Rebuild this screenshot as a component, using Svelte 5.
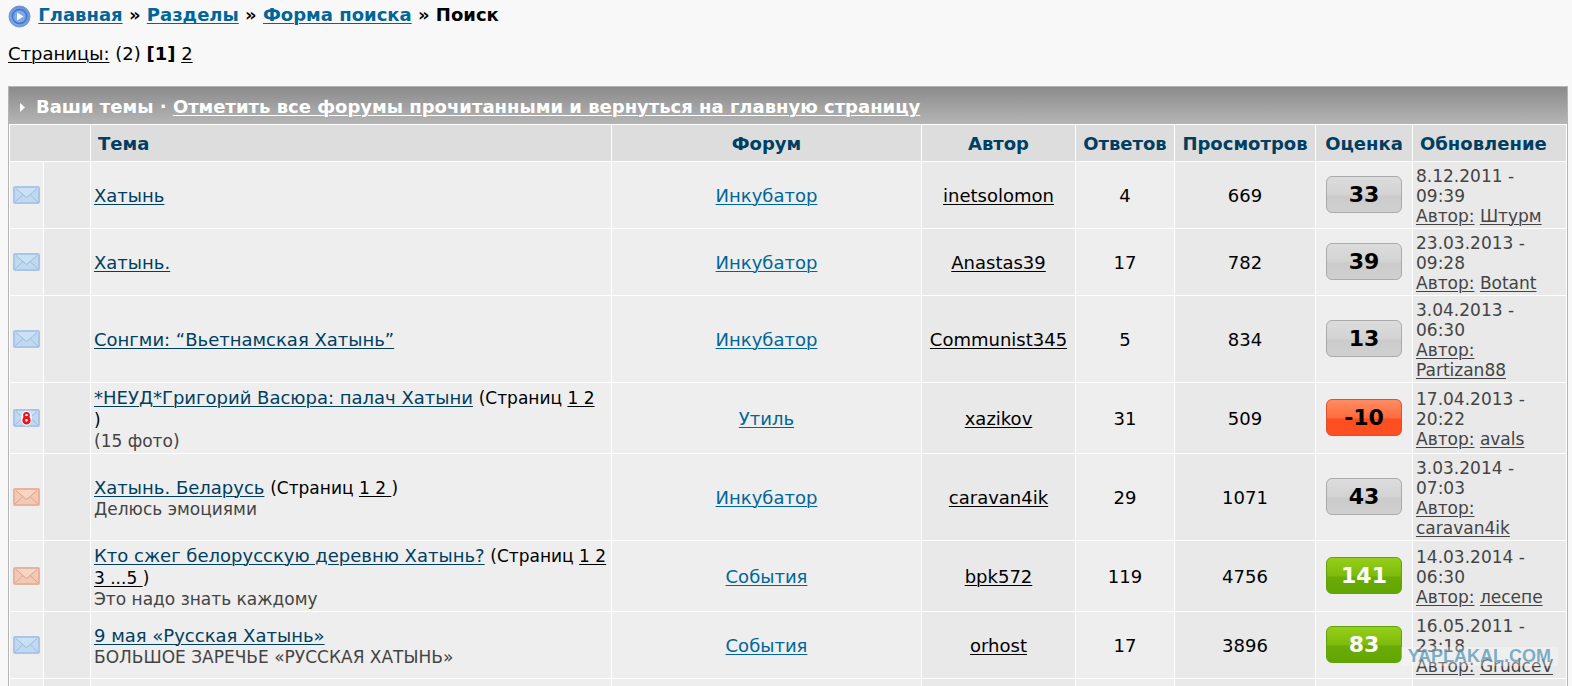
<script lang="ts">
	type Mail = 'read' | 'hot' | 'closed';

	interface Topic {
		mail: Mail;
		title: string;
		pages?: string[];
		desc?: string;
		forum: string;
		author: string;
		replies: number;
		views: number;
		rating: number;
		date: string;
		time: string;
		last: string;
	}

	// Each entry of pages is one line of page numbers
	const topics: Topic[] = [
		{ mail: 'read', title: 'Хатынь', forum: 'Инкубатор', author: 'inetsolomon', replies: 4, views: 669, rating: 33, date: '8.12.2011', time: '09:39', last: 'Штурм' },
		{ mail: 'read', title: 'Хатынь.', forum: 'Инкубатор', author: 'Anastas39', replies: 17, views: 782, rating: 39, date: '23.03.2013', time: '09:28', last: 'Botant' },
		{ mail: 'read', title: 'Сонгми: “Вьетнамская Хатынь”', forum: 'Инкубатор', author: 'Communist345', replies: 5, views: 834, rating: 13, date: '3.04.2013', time: '06:30', last: 'Partizan88' },
		{ mail: 'closed', title: '*НЕУД*Григорий Васюра: палач Хатыни', pages: ['1 2', ''], desc: '(15 фото)', forum: 'Утиль', author: 'xazikov', replies: 31, views: 509, rating: -10, date: '17.04.2013', time: '20:22', last: 'avals' },
		{ mail: 'hot', title: 'Хатынь. Беларусь', pages: ['1 2 '], desc: 'Делюсь эмоциями', forum: 'Инкубатор', author: 'caravan4ik', replies: 29, views: 1071, rating: 43, date: '3.03.2014', time: '07:03', last: 'caravan4ik' },
		{ mail: 'hot', title: 'Кто сжег белорусскую деревню Хатынь?', pages: ['1 2', '3 ...5 '], desc: 'Это надо знать каждому', forum: 'События', author: 'bpk572', replies: 119, views: 4756, rating: 141, date: '14.03.2014', time: '06:30', last: 'лесепе' },
		{ mail: 'read', title: '9 мая «Русская Хатынь»', desc: 'БОЛЬШОЕ ЗАРЕЧЬЕ «РУССКАЯ ХАТЫНЬ»', forum: 'События', author: 'orhost', replies: 17, views: 3896, rating: 83, date: '16.05.2011', time: '23:18', last: 'GrudceV' }
	];

	function getRatingClass(rating: number): string {
		if (rating < 0) return 'bad';
		return rating > 50 ? 'good' : 'neutral';
	}
</script>

<div class="page">
	<nav class="crumbs">
		<svg class="navIcon" width="23" height="23" viewBox="0 0 23 23" aria-hidden="true">
			<defs>
				<radialGradient id="ball" cx="0.4" cy="0.6" r="0.6">
					<stop offset="0" stop-color="#8db4f0" />
					<stop offset="1" stop-color="#6593dd" />
				</radialGradient>
			</defs>
			<circle cx="11.5" cy="11.5" r="10.5" fill="url(#ball)" stroke="#6a93d6" />
			<circle cx="11.5" cy="11.5" r="7" fill="#7fa8ea" stroke="#4573c2" stroke-width="1.5" />
			<path d="M9 7.5L15.5 11.5L9 15.5Z" fill="#fff" />
		</svg>
		<a href="#main">Главная</a> » <a href="#sections">Разделы</a> » <a href="#form">Форма поиска</a> » Поиск
	</nav>

	<div class="pager"><a href="#pages">Страницы:</a> (2) <b>[1]</b> <a href="#page2">2</a></div>

	<section class="board">
		<h1 class="boardTitle">
			<svg width="5" height="9" viewBox="0 0 5 9" aria-hidden="true"><path d="M0 0L5 4.5L0 9Z" fill="#fff" /></svg>
			<span>Ваши темы · <a href="#read">Отметить все форумы прочитанными и вернуться на главную страницу</a></span>
		</h1>
		<table>
			<colgroup>
				<col class="colIcon" />
				<col class="colGap" />
				<col class="colTopic" />
				<col />
				<col class="colAuthor" />
				<col class="colReplies" />
				<col class="colViews" />
				<col class="colRating" />
				<col class="colLast" />
			</colgroup>
			<thead>
				<tr>
					<th colspan="2"></th>
					<th class="left">Тема</th>
					<th>Форум</th>
					<th>Автор</th>
					<th>Ответов</th>
					<th>Просмотров</th>
					<th>Оценка</th>
					<th class="left">Обновление</th>
				</tr>
			</thead>
			<tbody>
				{#each topics as topic}
					<tr>
						<td class="icon">
							<svg class={topic.mail} width="27" height="18" viewBox="0 0 27 18" aria-hidden="true">
								<rect class="paper" x="1" y="1" width="25" height="16" rx="1" />
								<path class="flap" d="M3 2H24L13.5 11Z" />
								<path class="fold" d="M2 16L10 8.5M25 16L17 8.5M3 2.5L11 9.5L13.5 11.5L16 9.5L24 2.5" />
								{#if topic.mail === 'closed'}
									<ellipse cx="13.5" cy="9.3" rx="5.5" ry="7.5" fill="#fff" />
									<circle cx="13.5" cy="6.3" r="2.4" fill="none" stroke="#e8141c" stroke-width="2" />
									<circle cx="13.5" cy="11.3" r="2.8" fill="none" stroke="#e8141c" stroke-width="2.8" />
								{/if}
							</svg>
						</td>
						<td class="dark"></td>
						<td class="topic">
							<a href="#topic">{topic.title}</a>
							{#if topic.pages}
								<span class="pageList">(Страниц <a href="#pages">{topic.pages.join('\n')}</a>)</span>
							{/if}
							{#if topic.desc}
								<div class="desc">{topic.desc}</div>
							{/if}
						</td>
						<td class="forum"><a href="#forum">{topic.forum}</a></td>
						<td class="dark"><a href="#author">{topic.author}</a></td>
						<td>{topic.replies}</td>
						<td class="dark">{topic.views}</td>
						<td class="score"><div class="rating {getRatingClass(topic.rating)}">{topic.rating}</div></td>
						<td class="dark last">
							{topic.date} - {topic.time}<br />
							<a href="#last">Автор:</a> <a href="#user">{topic.last}</a>
						</td>
					</tr>
				{/each}
				<tr class="next">
					<td></td>
					<td class="dark"></td>
					<td></td>
					<td></td>
					<td class="dark"></td>
					<td></td>
					<td class="dark"></td>
					<td></td>
					<td class="dark"></td>
				</tr>
			</tbody>
		</table>
	</section>
	<div class="watermark">YAPLAKAL.COM</div>
</div>

<style>
	:global(body) {
		margin: 0;
		background: #f8f8f8;
	}
	.page {
		position: relative;
		height: 100vh;
		box-sizing: border-box;
		overflow: hidden;
		padding: 4px 4px 0 8px;
		font-family: 'DejaVu Sans', Verdana, sans-serif;
		font-size: 18px;
		line-height: 22px;
		color: #000;
	}
	a {
		color: inherit;
		text-underline-offset: 2px;
		text-decoration-thickness: 1px;
	}
	.crumbs {
		font-weight: bold;
	}
	.crumbs a {
		color: #006699;
	}
	.navIcon {
		vertical-align: middle;
		margin-right: 1px;
	}
	.pager {
		margin: 15px 0 21px;
	}
	.board {
		border: 1px solid #b4b4b4;
		background: #fff;
	}
	.boardTitle {
		display: flex;
		align-items: center;
		gap: 11px;
		height: 37px;
		margin: 0;
		padding: 4px 11px 0;
		box-sizing: border-box;
		font-size: 18px;
		color: #fff;
		background: linear-gradient(#8b8b8b, #b5b5b5);
	}
	table {
		width: 100%;
		table-layout: fixed;
		border-collapse: separate;
		border-spacing: 1px;
	}
	.colIcon {
		width: 33px;
	}
	.colGap {
		width: 46px;
	}
	.colTopic {
		width: 520px;
	}
	.colAuthor {
		width: 153px;
	}
	.colReplies {
		width: 98px;
	}
	.colViews {
		width: 140px;
	}
	.colRating {
		width: 96px;
	}
	.colLast {
		width: 153px;
	}
	th {
		height: 36px;
		box-sizing: border-box;
		padding: 2px 7px 0;
		background: #dddddd;
		color: #003f62;
	}
	.left {
		text-align: left;
	}
	td {
		padding: 4px 3px 2px;
		background: #eeeeee;
		text-align: center;
		vertical-align: middle;
	}
	.dark {
		background: #e9e9e9;
	}
	.icon,
	.score {
		padding: 3px;
	}
	.icon svg {
		display: block;
	}
	.paper {
		fill: #bfd9f1;
		stroke: #abc5e7;
		stroke-width: 2;
	}
	.flap {
		fill: #c8e1f4;
	}
	.fold {
		fill: none;
		stroke: #a0bce0;
	}
	.hot .paper {
		fill: #f1c9b4;
		stroke: #e9b29a;
	}
	.hot .flap {
		fill: #f6d5c4;
	}
	.hot .fold {
		stroke: #e0a388;
	}
	.topic {
		text-align: left;
		white-space: nowrap;
	}
	.topic > a {
		color: #003f62;
	}
	.pageList {
		font-size: 17px;
	}
	.pageList a {
		white-space: pre;
	}
	.desc {
		font-size: 17px;
		line-height: 20px;
		color: #444;
	}
	.forum a {
		color: #006699;
	}
	.rating {
		height: 37px;
		margin: 0 7px;
		box-sizing: border-box;
		border: 1px solid #aaa;
		border-radius: 6px;
		font-size: 22px;
		font-weight: bold;
		line-height: 35px;
	}
	.neutral {
		background: linear-gradient(#dcdcdc, #d3d3d3 50%, #cbcbcb 55%, #d0d0d0);
	}
	.bad {
		border-color: #d8532d;
		background: linear-gradient(#ff8c63, #ff6c3d 50%, #fb4f20 55%, #ff4e22);
	}
	.good {
		border-color: #61a20c;
		background: linear-gradient(#94cf18, #7fbb0c 50%, #6bab06 55%, #62a602);
		color: #fff;
	}
	.last {
		font-size: 17px;
		line-height: 20px;
		color: #444;
		text-align: left;
	}
	.next td {
		height: 60px;
	}
	.watermark {
		position: absolute;
		right: 14px;
		bottom: 20px;
		padding: 0 7px;
		background: rgba(255, 255, 255, 0.3);
		font-family: 'Liberation Sans', Arial, sans-serif;
		font-size: 18px;
		font-weight: bold;
		line-height: 19px;
		color: rgba(74, 143, 180, 0.7);
	}
</style>
